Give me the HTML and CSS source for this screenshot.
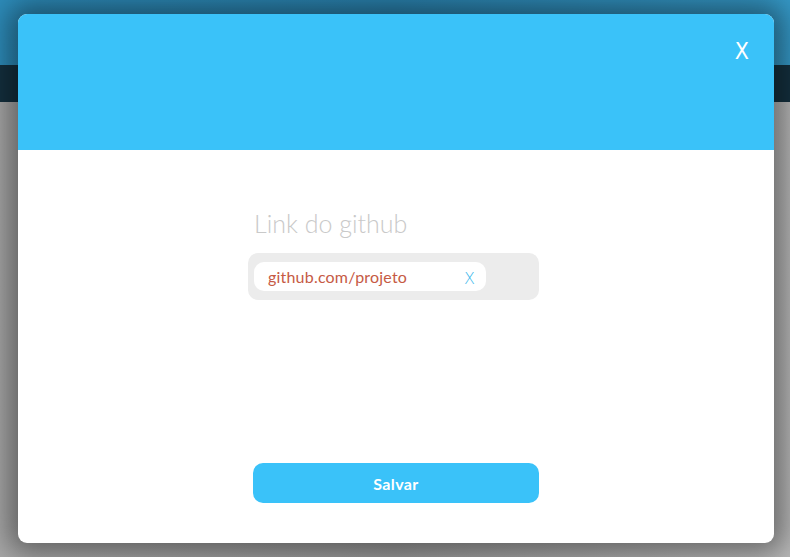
FILE: index.html
```html
<!DOCTYPE html>
<html lang="pt">
<head>
<meta charset="utf-8">
<link rel="stylesheet" href="styles.css">
<title>Link do github</title>
</head>
<body>
<div class="page">
  <div class="topbar"></div>
  <div class="navbar"></div>
  <div class="content"></div>
</div>
<div class="modal">
  <div class="modal-header">
    <span class="close">X</span>
  </div>
  <div class="modal-body">
    <div class="field">
      <div class="label">Link do github</div>
      <div class="input-wrap">
        <div class="chip">
          <span class="chip-text">github.com/projeto</span>
          <span class="chip-x">X</span>
        </div>
      </div>
    </div>
    <button class="save">Salvar</button>
  </div>
</div>
</body>
</html>
```
FILE: styles.css
```css
* { box-sizing: border-box; }
html, body { margin: 0; padding: 0; }
body {
  width: 790px;
  height: 557px;
  overflow: hidden;
  font-family: "Lato", "Open Sans", sans-serif;
  background: #b0b0b0;
}
.page { display: flex; flex-direction: column; height: 557px; }
.topbar { height: 65px; background: linear-gradient(90deg, #2d8cba, #2a82ae 50%, #3598c6); }
.navbar { height: 37px; background: #14303f; }
.content { flex: 1; background: linear-gradient(90deg, #a8a8a8, #9a9a9a 50%, #b8b8b8); }
.modal {
  position: absolute;
  left: 18px;
  top: 14px;
  width: 756px;
  height: 529px;
  border-radius: 9px;
  overflow: hidden;
  background: #fff;
  box-shadow: 0 0 28px 10px rgba(0,0,0,0.42);
  display: flex;
  flex-direction: column;
}
.modal-header {
  height: 136px;
  background: #3ac2f9;
  display: flex;
  justify-content: flex-end;
  align-items: flex-start;
  padding: 25px 25px 0 0;
}
.close {
  color: #fff;
  font-family: "DejaVu Sans Condensed", "DejaVu Sans", sans-serif;
  font-size: 23px;
  line-height: 24px;
}
.modal-body {
  flex: 1;
  display: flex;
  flex-direction: column;
  align-items: flex-start;
  padding-top: 59px;
}
.field { width: 291px; margin-left: 230px; }
.label {
  color: #c9c9c9;
  font-size: 25px;
  font-weight: 300;
  line-height: 28px;
  padding-left: 6px;
  margin-bottom: 16px;
}
.input-wrap {
  background: #ececec;
  border-radius: 10px;
  height: 47px;
  padding: 9px 53px 0 6px;
}
.chip {
  background: #fff;
  border-radius: 10px;
  height: 29px;
  display: flex;
  align-items: center;
  justify-content: space-between;
  padding: 0 11px 0 14px;
}
.chip-text {
  color: #c65a44;
  font-size: 16px;
  letter-spacing: 0.2px;
}
.chip-x {
  color: #3ab8ec;
  font-family: "DejaVu Sans", sans-serif;
  font-weight: 300;
  font-size: 16px;
  margin-top: 4px;
}
.save {
  margin-top: 163px;
  margin-left: 235px;
  width: 286px;
  height: 40px;
  border: none;
  border-radius: 10px;
  background: #3ac2f9;
  color: #fff;
  font-family: "Lato", sans-serif;
  font-weight: 700;
  font-size: 16px;
  letter-spacing: 0.4px;
}
```
